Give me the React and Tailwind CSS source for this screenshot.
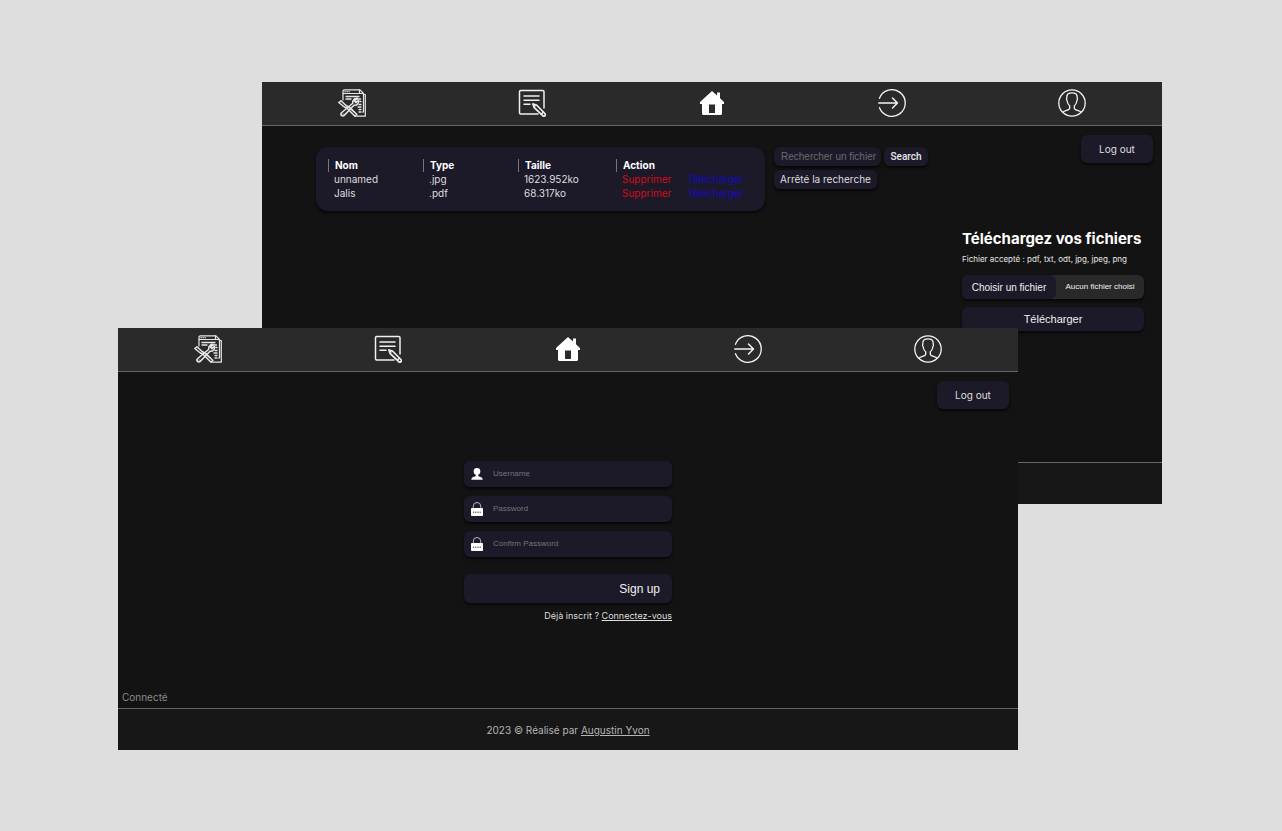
import React from "react";

const panel = "rounded-md bg-[#1c1929] shadow-[0_2px_3px_rgba(0,0,0,0.7)]";

function ToolsIcon() {
  return (
    <svg viewBox="0 0 28 28" className="size-7" fill="none" stroke="#e6e6e6" strokeWidth="1.200" strokeLinejoin="round" strokeLinecap="round" aria-hidden="true">
      <path d="M5 11V2.500Q5 .8 6.700 .8H22L25.500 4.500V23H24.500" />
      <path d="M5 4.500H21.500V.8M21.500 4.500H25.500M7 2.700h.3M9 2.700h.3M11 2.700h.3" />
      <path d="M25.500 5.500H27.300V27.200H18" />
      <path d="M8 7.500H21M8 10H13M21 10H22.500M22 12.500h1M21 15.500h2M20 18h3M21 20.500h2M21 23h2" strokeWidth="1.300" />
      <path d="M20 9.500a4 4 0 0 0-5.200 4.700L3.500 23.700a1.900 1.900 0 0 0 2.700 2.700L16 16.200a4 4 0 0 0 4.600-5L18 13.600l-1.800-1.800Z" strokeWidth="1.500" />
      <path d="M.8 13.500 3 11.800 8 16.500 10 17.500 18.800 25.200 17 27.200 8.800 19 6.300 18Z" strokeWidth="1.500" />
      <path d="M12 18.500 16.500 23.200M5 25h.2" />
    </svg>
  );
}

function NoteIcon() {
  return (
    <svg viewBox="0 0 28 28" className="size-7" fill="none" stroke="#f0f0f0" strokeWidth="1.500" strokeLinejoin="round" strokeLinecap="round" aria-hidden="true">
      <path d="M26 19V2.700Q26 1.500 24.800 1.500H2.700Q1.500 1.500 1.500 2.700V23.800Q1.500 25 2.700 25H20" />
      <path d="M6 7H21M6 11.200H21M6 15.300H12" strokeWidth="1.500" />
      <path d="M15 15 18.500 16 27.300 25Q27.600 27 25.500 27.400L16 18.300Z" strokeWidth="1.700" />
      <path d="M23.500 25 25.500 23M15 15l2 2" />
    </svg>
  );
}

function HomeIcon() {
  return (
    <svg viewBox="0 0 24 24" className="size-6" fill="#ffffff" aria-hidden="true">
      <path fillRule="evenodd" d="M12 0 17 4.500V1.500H20V7.300L24 11V13H22V22.500Q22 24 20.500 24H3.500Q2 24 2 22.500V13H0V11ZM9 13.500V22H15V13.500Z" />
    </svg>
  );
}

function ArrowIcon() {
  return (
    <svg viewBox="0 0 28 28" className="size-7" fill="none" stroke="#f4f4f4" strokeWidth="1.300" strokeLinecap="round" strokeLinejoin="round" aria-hidden="true">
      <path d="M1.500 9.300A13.300 13.300 0 1 1 1.500 18.700" />
      <path d="M.8 14H19.500M14.500 9 19.500 14 14.500 19" strokeWidth="1.500" />
    </svg>
  );
}

function ProfileIcon() {
  return (
    <svg viewBox="0 0 28 28" className="size-7" fill="none" stroke="#f4f4f4" strokeWidth="1.300" strokeLinejoin="round" aria-hidden="true">
      <circle cx="14" cy="14" r="13.200" />
      <path d="M4.800 23.200C7 21 11.700 21.500 11.700 19V16.800C9.700 15.500 9.300 13.300 9 11.500 8 10.500 8.800 9.300 8.800 9 8.300 5.500 10.500 3.800 14 3.800S19.700 5.500 19.200 9C19.200 9.300 20 10.500 19 11.500 18.700 13.300 18.300 15.500 16.300 16.800V19C16.300 21.500 21 21 23.200 23.200" />
    </svg>
  );
}

function UserGlyph() {
  return (
    <svg viewBox="0 0 12 12" className="size-3 shrink-0" fill="#ffffff" aria-hidden="true">
      <circle cx="6" cy="3.400" r="3.300" />
      <path d="M.3 11.700C.3 9.400 2.300 8.600 4.700 8.200V6H7.300V8.200C9.700 8.600 11.700 9.400 11.700 11.700Z" />
    </svg>
  );
}

function LockGlyph() {
  return (
    <svg viewBox="0 0 12 14" className="h-[14px] w-3 shrink-0" aria-hidden="true">
      <path d="M2.300 6.500V4.200a3.700 3.700 0 0 1 7.400 0V6.500" fill="none" stroke="#b8b8c0" strokeWidth="1" />
      <rect y="6" width="12" height="8" rx=".8" fill="#ffffff" />
      <path d="M2 10.200H10.300" stroke="#1c1929" strokeWidth="1" strokeDasharray="1.200 1" />
    </svg>
  );
}

const navItems = [
  ["Outils", ToolsIcon],
  ["Notes", NoteIcon],
  ["Accueil", HomeIcon],
  ["Connexion", ArrowIcon],
  ["Profil", ProfileIcon],
];

function NavBar() {
  return (
    <nav className="grid h-11 grid-cols-5 border-b border-[#666666] bg-[#2a2a2a]">
      {navItems.map(([name, Icon]) => (
        <a key={name} href="#" aria-label={name} className="flex items-center justify-center pb-0.5">
          <Icon />
        </a>
      ))}
    </nav>
  );
}

function LogOut() {
  return (
    <button type="button" className={`${panel} h-7 w-[72px] self-end text-[10px] text-[#dedede]`}>
      Log out
    </button>
  );
}

const files = [
  ["unnamed", ".jpg", "1623.952ko"],
  ["Jalis", ".pdf", "68.317ko"],
];

function FileTable() {
  return (
    <div className="h-16 w-[449px] shrink-0 rounded-xl bg-[#1c1929] px-3 pt-3 shadow-[0_2px_3px_rgba(0,0,0,0.7)]">
      <table className="w-full table-fixed text-left text-[10px] leading-[13px] text-[#dedede]">
        <colgroup>
          <col className="w-[95px]" />
          <col className="w-[95px]" />
          <col className="w-[98px]" />
          <col />
        </colgroup>
        <thead>
          <tr className="text-white">
            {["Nom", "Type", "Taille", "Action"].map((h) => (
              <th key={h} scope="col" className="p-0 font-bold">
                <span className="block border-l border-[#77757f] pl-1.5">{h}</span>
              </th>
            ))}
          </tr>
        </thead>
        <tbody>
          {files.map((row) => (
            <tr key={row[0]} className="h-[14px]">
              {row.map((cell) => (
                <td key={cell} className="p-0 pl-1.5">{cell}</td>
              ))}
              <td className="p-0 pl-1.5">
                <span className="flex gap-4">
                  <a href="#" className="text-[#d30d16]">Supprimer</a>
                  <a href="#" className="text-[#1408cf]">Télécharger</a>
                </span>
              </td>
            </tr>
          ))}
        </tbody>
      </table>
    </div>
  );
}

function SearchForm() {
  return (
    <form className="flex shrink-0 flex-col items-start gap-1" onSubmit={(e) => e.preventDefault()}>
      <div className="flex gap-[3px]">
        <input type="text" aria-label="Rechercher un fichier" placeholder="Rechercher un fichier" className={`${panel} h-[19px] w-[107px] pl-[7px] font-[Liberation_Sans,sans-serif] text-[10px] text-white outline-none placeholder:text-[#6b6b6b]`} />
        <button type="submit" className={`${panel} h-[19px] w-11 font-[Roboto,sans-serif] text-[10px] font-medium text-[#e8e8e8]`}>Search</button>
      </div>
      <button type="reset" className={`${panel} h-[19px] w-[103px] text-[10px] whitespace-nowrap text-[#dedede]`}>Arrêté la recherche</button>
    </form>
  );
}

function UploadForm() {
  return (
    <form className="mt-[66px] mr-[9px] w-[182px]" onSubmit={(e) => e.preventDefault()}>
      <h2 className="text-[15px] leading-5 font-bold whitespace-nowrap text-white">Téléchargez vos fichiers</h2>
      <p className="mt-1 text-[8px] leading-3 whitespace-nowrap text-[#e8e8e8]">Fichier accepté : pdf, txt, odt, jpg, jpeg, png</p>
      <label className="mt-[10px] flex h-6 items-center rounded-md bg-[#292929] font-[Liberation_Sans,sans-serif] shadow-[0_2px_3px_rgba(0,0,0,0.7)]">
        <input type="file" className="sr-only" />
        <span className="flex h-6 w-[94px] items-center justify-center rounded-md bg-[#1c1929] text-[10px] text-[#f0f0f0]">Choisir un fichier</span>
        <span className="flex-1 text-center text-[8px] whitespace-nowrap text-[#f0f0f0]">Aucun fichier choisi</span>
      </label>
      <button type="submit" className={`${panel} mt-2 h-6 w-full font-[Liberation_Sans,sans-serif] text-[11px] text-[#f0f0f0]`}>Télécharger</button>
    </form>
  );
}

function FilesWindow() {
  return (
    <section className="ml-36 flex min-h-[422px] flex-col bg-[#131313]">
      <NavBar />
      <div className="flex flex-1 justify-between">
        <div className="flex items-start gap-[9px] pt-[21px] pl-[54px]">
          <FileTable />
          <SearchForm />
        </div>
        <div className="flex flex-col items-end pt-[9px] pr-[9px]">
          <LogOut />
          <UploadForm />
        </div>
      </div>
      <footer className="h-[42px] border-t border-[#666666] bg-[#171717]" />
    </section>
  );
}

const fields = [
  ["username", "Username", "text", UserGlyph],
  ["password", "Password", "password", LockGlyph],
  ["confirm", "Confirm Password", "password", LockGlyph],
];

function SignUpWindow() {
  return (
    <section className="relative -mt-44 mr-36 flex min-h-[422px] flex-col bg-[#131313]">
      <NavBar />
      <div className="flex flex-1 flex-col">
        <div className="flex flex-col pt-[9px] pr-[9px]">
          <LogOut />
        </div>
        <form className="mx-auto mt-[52px] flex w-[208px] flex-col gap-[9px]" onSubmit={(e) => e.preventDefault()}>
          {fields.map(([id, name, type, Glyph]) => (
            <label key={id} className={`${panel} flex h-[26px] items-center gap-[10px] px-[7px]`}>
              <Glyph />
              <input id={id} type={type} aria-label={name} placeholder={name} className="min-w-0 flex-1 bg-transparent font-[Liberation_Sans,sans-serif] text-[8px] text-white outline-none placeholder:text-[#757575]" />
            </label>
          ))}
          <button type="submit" className={`${panel} mt-2 h-[29px] pr-3 text-right font-[Liberation_Sans,sans-serif] text-xs text-[#f0f0f0]`}>Sign up</button>
          <p className="-mt-1 text-right text-[9px] leading-4 whitespace-nowrap text-[#dedede]">
            Déjà inscrit ? <a href="#" className="underline">Connectez-vous</a>
          </p>
        </form>
        <p className="mt-auto px-1 pb-[3px] text-[10px] leading-4 text-[#8a8a8a]">Connecté</p>
      </div>
      <footer className="flex h-[42px] items-center justify-center border-t border-[#666666] bg-[#171717] pt-0.5 text-[10px] text-[#b5b5b5]">
        <p>2023 © Réalisé par <a href="#" className="underline">Augustin Yvon</a></p>
      </footer>
    </section>
  );
}

export default function App() {
  return (
    <main className="min-h-screen bg-[#dedede] pt-[82px] pr-[120px] pb-20 pl-[118px] font-[Inter,sans-serif]">
      <FilesWindow />
      <SignUpWindow />
    </main>
  );
}
